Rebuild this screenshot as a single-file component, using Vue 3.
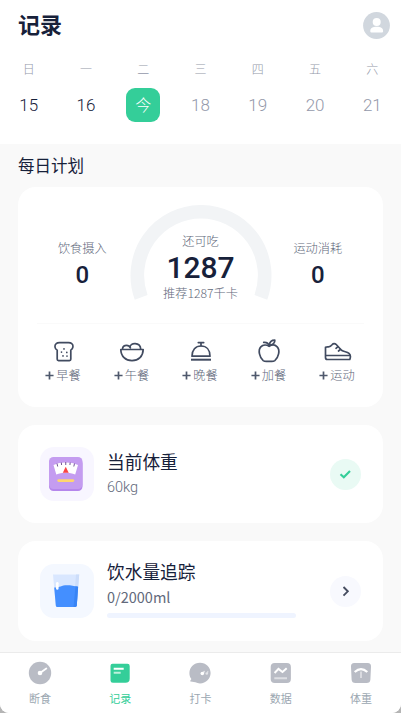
<script setup>
const days = [
  { w: '日', d: '15', past: true },
  { w: '一', d: '16', past: true },
  { w: '二', d: '今', today: true },
  { w: '三', d: '18' },
  { w: '四', d: '19' },
  { w: '五', d: '20' },
  { w: '六', d: '21' },
]
const meals = [
  { key: 'bread', label: '早餐' },
  { key: 'bowl', label: '午餐' },
  { key: 'cloche', label: '晚餐' },
  { key: 'apple', label: '加餐' },
  { key: 'shoe', label: '运动' },
]
const tabs = [
  { key: 'fast', label: '断食' },
  { key: 'record', label: '记录', active: true },
  { key: 'check', label: '打卡' },
  { key: 'data', label: '数据' },
  { key: 'weight', label: '体重' },
]
</script>

<template>
  <div class="frame">
    <div class="screen">
      <header class="top">
        <div class="title-row">
          <h1>记录</h1>
          <svg class="avatar" viewBox="0 0 27 27">
            <circle cx="13.5" cy="13.5" r="13.4" fill="#d1d7de" />
            <circle cx="13.7" cy="9.900" r="4" fill="#fff" />
            <path d="M7.300 19.500v-.6c0-2.800 2.600-4.100 6.400-4.100s6.400 1.300 6.400 4.100v.6a1.100 1.100 0 0 1-1.100 1.100H8.400a1.100 1.100 0 0 1-1.100-1.100z" fill="#fff" />
          </svg>
        </div>
        <div class="week">
          <div v-for="x in days" :key="x.w" class="day">
            <span class="wd">{{ x.w }}</span>
            <span class="num" :class="{ past: x.past, today: x.today }">{{ x.d }}</span>
          </div>
        </div>
      </header>

      <main>
        <h2>每日计划</h2>
        <section class="card plan">
          <div class="summary">
            <div class="side left"><span class="cap">饮食摄入</span><b>0</b></div>
            <div class="gauge">
              <svg class="arc" viewBox="0 0 142 96">
                <path d="M11.150 92.300A63.700 63.700 0 1 1 130.850 92.300" fill="none" stroke="#f2f4f6" stroke-width="13.600" />
              </svg>
              <div class="gauge-text">
                <span class="cap">还可吃</span>
                <strong>1287</strong>
                <span class="cap rec">推荐1287千卡</span>
              </div>
            </div>
            <div class="side"><span class="cap">运动消耗</span><b>0</b></div>
          </div>
          <div class="meals">
            <div v-for="m in meals" :key="m.key" class="meal">
              <svg class="meal-icon" viewBox="0 0 28 26">
                <g fill="none" stroke="#414b60" stroke-width="1.700" stroke-linecap="round" stroke-linejoin="round">
                  <template v-if="m.key === 'bread'">
                    <path d="M7.200 13.200C4.500 11.700 4.300 8.300 6.200 6.700C7.200 5.800 8.300 5.700 9.500 5.700H18.500C19.700 5.700 20.800 5.800 21.800 6.700C23.700 8.300 23.300 11.700 20.800 13.200V22.300A1.300 1.300 0 0 1 19.500 23.600H8.500A1.300 1.300 0 0 1 7.200 22.300Z" />
                    <path d="M14 11.800v.1M11.500 15v.1M16.800 15.400v.1M13 18.800v.1M17 19v.1" />
                  </template>
                  <template v-else-if="m.key === 'bowl'">
                    <path d="M2.800 12.500H25.200C25 19.500 20.500 23.700 14 23.700S3 19.500 2.800 12.500Z" />
                    <path d="M4.500 12.200C4.500 9.500 6.300 8.300 8.600 8.300C10.400 8.300 11.700 9.300 12.400 10.900M12 10.300C12.200 7.900 14.500 6.500 17.200 6.700C20.400 6.900 22.600 9.200 22.700 12.200" />
                  </template>
                  <template v-else-if="m.key === 'cloche'">
                    <path d="M5 19.200C5 12.800 8.500 9 14 9S23 12.800 23 19.200Z" />
                    <path d="M11.300 5.600H16.700M14 5.700V8.700" />
                    <path d="M4 22.700H24" stroke-width="2" stroke-linecap="butt" />
                  </template>
                  <template v-else-if="m.key === 'apple'">
                    <path d="M14.200 9.300C11.500 7.700 7.900 7.700 5.800 9.900C2.700 13.200 4.600 20.700 8.200 23.600C10.100 25 11.700 24.300 14 24.300S17.900 25 19.800 23.600C23.500 20.700 25.400 13.200 22.200 9.900C20.100 7.700 16.800 7.700 14.200 9.300Z" />
                    <path d="M14.200 9C13.600 6.400 11.400 5.200 8.700 5.400M14.300 8.300C14.700 4.900 16.500 3.200 19.800 3.200C20.100 5.900 17.900 8.200 14.300 8.300" />
                  </template>
                  <template v-else>
                    <path d="M1.500 10.300C2.600 9.800 3.200 9.700 4.500 9.900C6 9.900 7.200 8.900 8.300 7.500C9.200 6.300 10.900 6.200 12 7.300L17.500 13.300C19.900 15 22.800 14.600 25 16.300C26.600 17.700 26.600 20.400 25.800 22.500H3.400C2.100 22.500 1.500 21.700 1.500 20.500Z" />
                    <path d="M1.800 18.500H26M12 11.300L13.700 9.800M14.500 14L16.500 12.300" />
                  </template>
                </g>
              </svg>
              <div class="meal-label">
                <svg class="plus" viewBox="0 0 10 10"><path d="M5 .5V9.500M.5 5H9.500" stroke="#4e586c" stroke-width="1.900" /></svg>
                <span>{{ m.label }}</span>
              </div>
            </div>
          </div>
        </section>

        <section class="card item weight">
          <div class="tile purple">
            <svg class="tile-icon" viewBox="0 0 34 36">
              <rect x="0" y="3" width="33.500" height="32" rx="4.500" fill="#b586ec" />
              <rect x="0" y="1" width="33.500" height="32" rx="4.500" fill="#c49cf0" />
              <path d="M4.500 9C11.500 5.700 22 5.700 29 9L26.200 18.500C20.500 16.200 13 16.200 7.300 18.500Z" fill="#fff" />
              <path d="M8 7.500l.7 3M12.300 6.500l.3 2.500M16.750 6v3M21.200 6.500l-.3 2.500M25.500 7.500l-.7 3" stroke="#725494" stroke-width="1" />
              <path d="M16.750 10.800L19.700 16.800H13.800Z" fill="#fa4545" />
              <rect x="8.300" y="23.200" width="17" height="2.800" rx="1.400" fill="#ffd66e" />
            </svg>
          </div>
          <div class="info">
            <h3>当前体重</h3>
            <p class="kg">60kg</p>
          </div>
          <div class="action green">
            <svg viewBox="0 0 31 31"><path d="M10.500 15.200L13.800 18.300L20 11.900" fill="none" stroke="#34ce99" stroke-width="2.100" /></svg>
          </div>
        </section>

        <section class="card item water">
          <div class="tile blue">
            <svg class="tile-icon" viewBox="0 0 34 36">
              <path d="M4 1.500H30.200L27.800 32.800Q27.600 34 26.400 34H8.200Q7 34 6.800 32.800Z" fill="#d9e7ff" />
              <path d="M27 1.500H30.200L27.800 32.800Q27.600 34 26.400 34H24.500Z" fill="#ccddfa" />
              <path d="M5.200 14.500C10 15 12 12.300 18 12.300C22 12.300 25 13 29.100 13.800L27.800 32.300Q27.600 34 26.200 34H8.300Q7 34 6.800 32.500Z" fill="#448fff" />
              <path d="M26.500 13.300L29.100 13.800L27.800 32.300Q27.600 34 26.200 34H24.500Z" fill="#3884f5" />
              <path d="M8.300 10.300V15.500" stroke="#fff" stroke-width="2.500" stroke-linecap="round" />
            </svg>
          </div>
          <div class="info">
            <h3>饮水量追踪</h3>
            <p>0/2000ml</p>
            <div class="bar"></div>
          </div>
          <div class="action pale">
            <svg viewBox="0 0 31 31"><path d="M13.500 11L17.800 15.300L13.500 19.600" fill="none" stroke="#464d60" stroke-width="1.900" /></svg>
          </div>
        </section>
      </main>

      <nav>
        <div v-for="t in tabs" :key="t.key" class="tab" :class="{ active: t.active }">
          <svg viewBox="0 0 24 24">
            <template v-if="t.key === 'fast'">
              <circle cx="12" cy="12" r="11.200" fill="#b9bcc5" />
              <circle cx="12" cy="12" r="2.300" fill="#fff" />
              <path d="M12 12L18.300 7.500" stroke="#fff" stroke-width="1.800" stroke-linecap="round" />
            </template>
            <template v-else-if="t.key === 'record'">
              <path d="M4.500 2.700H19.500A2.200 2.200 0 0 1 21.700 4.900V17.500Q21.700 21.800 17.500 21.800H4.900A2.400 2.400 0 0 1 2.500 19.400V4.700A2 2 0 0 1 4.500 2.700Z" fill="#34ce99" />
              <path d="M5.700 7.800H15.700" stroke="#fff" stroke-width="2" />
              <path d="M5.700 11.800H12.700" stroke="#bdf0dd" stroke-width="2" />
            </template>
            <template v-else-if="t.key === 'check'">
              <path d="M12 1.700C18 1.700 22.600 6.300 22.600 12S18 22.400 12 22.400C10.300 22.400 8.800 22 7.400 21.300L2.700 20.600Q1.700 20.300 2.400 19.500L3.400 18C2 16.300 1.400 14.200 1.400 12C1.400 6.300 6 1.700 12 1.700Z" fill="#b9bcc5" />
              <circle cx="14.300" cy="12.500" r="1.800" fill="#fff" /><path d="M15.500 12.500L16.200 9.900" stroke="#fff" stroke-width="1" />
              <circle cx="18.800" cy="12.500" r="1.300" fill="#e2e3e7" /><path d="M19.500 12.500L19.900 9.900" stroke="#e2e3e7" stroke-width="1" />
            </template>
            <template v-else-if="t.key === 'data'">
              <rect x="1.700" y="2" width="20.200" height="20" rx="4" fill="#b9bcc5" />
              <path d="M5.600 12L9.500 7.900L13.500 11L17.700 7.200" fill="none" stroke="#fff" stroke-width="2" />
              <path d="M5.300 17.200H18" stroke="#dedfe3" stroke-width="2" />
            </template>
            <template v-else>
              <path d="M5.300 2H18.700Q22.200 2 22 5.700L21.400 18.500Q21.200 22 17.500 22H6.500Q2.800 22 2.600 18.500L2 5.700Q1.800 2 5.300 2Z" fill="#b9bcc5" />
              <path d="M5.700 11Q12 5.300 18.300 11" fill="none" stroke="#fff" stroke-width="2.200" />
              <path d="M12 10.500V17" stroke="#e2e3e7" stroke-width="1.600" />
            </template>
          </svg>
          <span>{{ t.label }}</span>
        </div>
      </nav>
    </div>
  </div>
</template>

<style>
body { margin: 0; background: #b5b5b5; }
</style>

<style scoped>
* { box-sizing: border-box; }
.frame { height: 713px; overflow: hidden; font-family: Roboto, "Noto Sans CJK SC", sans-serif; color: #17213a; }
.screen { height: 713px; display: flex; flex-direction: column; background: #f9f9f9; border-radius: 0 0 9px 9px; overflow: hidden; }
h1, h2, h3, p { margin: 0; }
.top { height: 144px; background: #fff; flex: none; }
.title-row { height: 50px; padding: 0 11px 0 18px; display: flex; align-items: center; justify-content: space-between; }
h1 { font-size: 22px; line-height: 30px; font-weight: 700; padding-top: 2px; }
.avatar { width: 27px; height: 27px; }
.week { display: grid; grid-template-columns: repeat(7, 1fr); padding-right: 0; padding-top: 11px; }
.day { display: flex; flex-direction: column; align-items: center; }
.wd { font-size: 12px; line-height: 18px; color: #9499aa; font-weight: 300; }
.num { margin-top: 9px; width: 34px; height: 34px; border-radius: 9px; font-size: 17px; line-height: 35px; text-align: center; color: #9499aa; font-weight: 350; }
.num.past { color: #17213a; }
.num.today { background: #34ce99; color: #fff; font-weight: 300; font-size: 16px; line-height: 35px; }
main { flex: 1; padding: 0 18px; min-height: 0; }
h2 { height: 42.500px; padding-top: 9.500px; font-size: 16.500px; line-height: 26px; font-weight: 400; }
.card { background: #fff; border-radius: 18px; }
.plan { height: 220.500px; padding: 18.500px 19px 0; }
.summary { height: 119px; display: flex; justify-content: center; border-bottom: 1px solid #fafafa; }
.side { width: 93px; display: flex; flex-direction: column; align-items: center; padding-top: 34px; }
.left { padding-right: 2px; }
.side b { font: 500 24px/30px Roboto, sans-serif; margin-top: 1px; }
.cap { font-size: 12.200px; line-height: 20px; color: #62697b; font-weight: 300; white-space: nowrap; }
.gauge { width: 142px; display: grid; }
.arc, .gauge-text { grid-area: 1 / 1; }
.arc { width: 142px; height: 96px; }
.gauge-text { display: flex; flex-direction: column; align-items: center; padding-top: 27px; }
.gauge-text strong { font: 500 30px/32px Roboto, sans-serif; }
.rec { font-family: "Noto Sans CJK SC", sans-serif; line-height: 18px; }
.meals { display: grid; grid-template-columns: repeat(5, 68.500px); justify-content: center; padding-top: 13px; }
.meal { display: flex; flex-direction: column; align-items: center; }
.meal-icon { width: 28px; height: 26px; }
.meal-label { display: flex; align-items: center; gap: 2px; font-size: 12.200px; line-height: 20px; color: #62697b; font-weight: 300; margin-top: 3px; margin-left: -1px; }
.plus { width: 9px; height: 9px; margin-top: -2px; }
.item { margin-top: 18px; display: flex; align-items: center; padding: 0 22px; }
.weight { height: 98px; }
.water { height: 100px; }
.tile { width: 54px; height: 54px; border-radius: 14px; display: flex; align-items: center; justify-content: center; flex: none; }
.purple { background: #f8f6ff; }
.blue { background: #f4f8ff; }
.tile-icon { width: 34px; height: 36px; margin-left: -2px; }
.info { margin-left: 13px; flex: 1; }
h3 { font-size: 17.700px; line-height: 26px; font-weight: 400; }
p { font: 400 14.500px/24px "Noto Sans CJK SC", sans-serif; color: #62697b; }
.weight .info { padding-top: 2px; }
.water .info { padding-bottom: 3px; }
.water p { margin-top: -1px; }
.water h3 { margin-top: -1px; }
p.kg { font-family: Roboto, sans-serif; font-weight: 350; }
.bar { width: 189px; height: 5px; border-radius: 3px; background: #eff4ff; margin-top: 4px; }
.action { width: 31px; height: 31px; border-radius: 50%; flex: none; }
.action svg { display: block; }
.green { background: #e9faf4; }
.pale { background: #f8f9fe; }
nav { height: 61px; flex: none; background: #fff; border-top: 1px solid #ebebeb; display: grid; grid-template-columns: repeat(5, 1fr); padding-top: 8px; }
.tab { display: flex; flex-direction: column; align-items: center; font-size: 11px; line-height: 18px; color: #9ba7b1; font-weight: 400; }
.tab svg { width: 24px; height: 24px; margin-bottom: 6px; }
.tab.active { color: #34ce99; }
</style>
